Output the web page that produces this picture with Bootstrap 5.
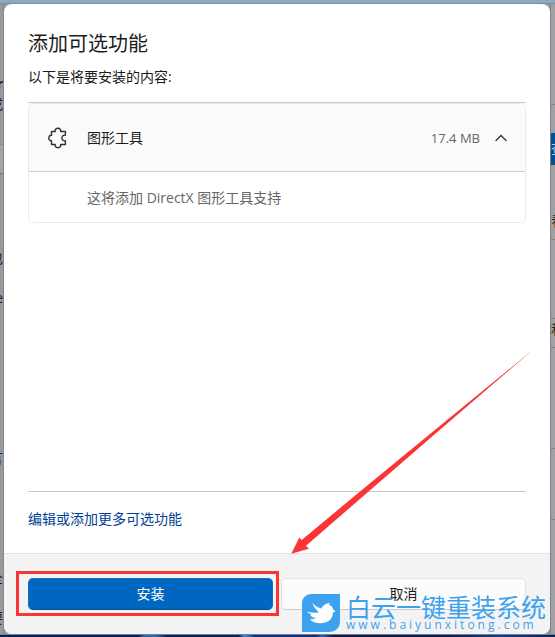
<!DOCTYPE html>
<html lang="zh-CN">
<head>
<meta charset="utf-8">
<meta name="viewport" content="width=device-width, initial-scale=1">
<title>添加可选功能</title>
<link href="https://cdn.jsdelivr.net/npm/bootstrap@5.3.0/dist/css/bootstrap.min.css" rel="stylesheet">
<style>
body { font-family: "Open Sans", "Noto Sans CJK SC", sans-serif; font-size: 14px; line-height: 20px; color: #1b1b1b; background: #97999e; }
.top-strip { height: 4px; background: #8aa9c3; border-bottom: 1px solid #7b8d9d; }
.bottom-strip { height: 3px; border-top: 1px solid #7d7f83; background: linear-gradient(90deg, #05205e 0 25%, #2a6ab5 26% 28%, #06205c 30% 43%, #3f8fd8 44%, #0a2f86 46% 57%, #2a68b8 58%, #061a4c 60% 80%, #0e3c98 90%, #06205c); }
.edge { overflow: hidden; white-space: nowrap; color: #222; }
.edge-left { width: 4px; background: #97999e; border-right: 1px solid #85878b; }
.edge-right { width: 5px; background: #a0a1a4; border-left: 1px solid #7f8184; }
.edge-word { display: flex; justify-content: flex-end; height: 20px; line-height: 20px; }
.edge-right .edge-word { justify-content: flex-start; }
.edge-gap-1 { height: 70px; }
.edge-gap-2 { height: 20px; }
.edge-gap-3 { height: 30px; }
.edge-gap-4 { height: 100px; }
.edge-gap-5 { height: 140px; }
.edge-rule { height: 1px; background: #838488; }
.edge-panel { height: 30px; background: #a4a5a6; border-top: 1px solid #8b8c90; border-bottom: 1px solid #707174; }
.edge-button { height: 32px; background: #004f98; color: #bcd; padding-top: 6px; }
.dialog-box { background: #fff; border-radius: 8px; overflow: hidden; }
.dialog-main { padding: 26px 24px 24px; }
.dialog-title { font-size: 20px; line-height: 28px; font-weight: 400; margin-bottom: 9px; }
.dialog-intro { margin-bottom: 15px; }
.feature-scroll { border-top: 1px solid #c8c8c8; border-bottom: 1px solid #c8c8c8; margin-bottom: 17px; }
.feature-card { border: 1px solid #ebebeb; border-radius: 5px; overflow: hidden; }
.feature-head { min-height: 68px; background: #fbfbfb; border: 0; border-bottom: 1px solid #d0d0d0; padding: 0 18px 0 19px; color: #1b1b1b; }
.feature-name { margin-left: 19px; }
.feature-size { font-size: 13px; margin-right: 15px; }
.muted-text { color: #666; }
.feature-detail { padding: 16px 16px 14px 58px; }
.more-link { color: #003e92; }
.dialog-foot { background: #f3f3f3; border-top: 1px solid #e3e3e3; padding: 24px; }
.foot-btn { --bs-btn-font-size: 14px; --bs-btn-line-height: 20px; --bs-btn-padding-y: 5px; --bs-btn-border-radius: 5px; }
.btn-install { --bs-btn-color: #fff; --bs-btn-bg: #0067c0; --bs-btn-border-color: #1370c3; --bs-btn-hover-color: #fff; --bs-btn-hover-bg: #1975c5; border-bottom-color: #00519a; }
.btn-cancel { --bs-btn-color: #1b1b1b; --bs-btn-bg: #fcfcfc; --bs-btn-border-color: #e3e3e3; --bs-btn-hover-bg: #f6f6f6; border-bottom-color: #ccc; }
.focus-frame { position: absolute; inset: -7px -6px -6px -12px; border: 3px solid #fa3535; pointer-events: none; }
.pointer-arrow { position: absolute; right: 15px; bottom: 80px; pointer-events: none; }
.site-mark { position: absolute; right: 4px; bottom: 2px; gap: 6px; color: #3ca2f0; pointer-events: none; }
.site-name { font-family: "Noto Sans CJK SC", sans-serif; font-size: 25px; line-height: 24px; }
.site-url { font-size: 12px; line-height: 14px; letter-spacing: 3px; }
</style>
<script src="https://cdn.jsdelivr.net/npm/bootstrap@5.3.0/dist/js/bootstrap.bundle.min.js"></script>
</head>
<body class="d-flex flex-column vh-100 overflow-hidden">
<div class="top-strip flex-shrink-0"></div>
<div class="d-flex flex-grow-1">
  <div class="edge edge-left flex-shrink-0" aria-hidden="true">
    <div class="edge-gap-1"></div>
    <div class="edge-word fw-bold">r</div>
    <div class="edge-word">成</div>
    <div class="edge-gap-3"></div>
    <div class="edge-panel"></div>
    <div class="edge-gap-1"></div>
    <div class="edge-word mt-1">也</div>
    <div class="edge-gap-2"></div>
    <div class="edge-word">e</div>
    <div class="edge-gap-5"></div>
    <div class="edge-word">言</div>
    <div class="edge-gap-4"></div>
    <div class="edge-word">全</div>
    <div class="edge-gap-2"></div>
    <div class="edge-word">要</div>
  </div>
  <main class="dialog-box position-relative flex-grow-1 d-flex flex-column">
    <div class="dialog-main flex-grow-1 d-flex flex-column">
      <h1 class="dialog-title">添加可选功能</h1>
      <p class="dialog-intro">以下是将要安装的内容:</p>
      <div class="feature-scroll flex-grow-1">
        <section class="feature-card">
          <button type="button" class="feature-head w-100 d-flex align-items-center text-start" data-bs-toggle="collapse" data-bs-target="#graphicsTools" aria-expanded="true" aria-controls="graphicsTools">
            <svg width="20" height="22" viewBox="0 0 20 22" fill="none" stroke="#303030" stroke-width="1.4" stroke-linejoin="round" aria-hidden="true"><path d="M3.5 4.5H7.2C6.6 2.6 8 1.3 9.9 1.3S13.2 2.6 12.6 4.5H17.4V8.2C15.3 7.8 13.9 9.1 13.9 11S15.3 14.2 17.4 13.8V17.5H12.6C13.2 19.4 11.8 20.7 9.9 20.7S6.6 19.4 7.2 17.5H3.5V13.7C1.8 14 .8 12.7 .8 11S1.8 8 3.5 8.3Z"/></svg>
            <span class="feature-name flex-grow-1">图形工具</span>
            <span class="feature-size muted-text">17.4 MB</span>
            <svg width="12" height="8" viewBox="0 0 12 8" fill="none" stroke="#333" stroke-width="1.3" stroke-linecap="round" aria-hidden="true"><path d="M1 6.5 6 1.5 11 6.5"/></svg>
          </button>
          <div class="collapse show" id="graphicsTools">
            <div class="feature-detail muted-text">这将添加 DirectX 图形工具支持</div>
          </div>
        </section>
      </div>
      <div><a href="#" class="more-link text-decoration-none">编辑或添加更多可选功能</a></div>
    </div>
    <footer class="dialog-foot d-flex gap-2">
      <div class="position-relative w-50">
        <button type="button" class="btn foot-btn btn-install w-100">安装</button>
        <div class="focus-frame"></div>
      </div>
      <div class="w-50">
        <button type="button" class="btn foot-btn btn-cancel w-100">取消</button>
      </div>
    </footer>
    <svg class="pointer-arrow" width="244" height="206" viewBox="0 0 244 206" aria-hidden="true"><path fill="#fa3535" d="M.3 205.7 8.3 189.5 10.7 192 69 143.5 142 83.5 243 1 144 86 73 147.5 15 197.7 18 200.8Z"/></svg>
    <div class="site-mark d-flex align-items-start">
      <svg width="38" height="38" viewBox="0 0 38 38" aria-hidden="true"><path fill="#3ca2f0" d="M9 0H38V28A10 10 0 0 1 28 38H0V9A9 9 0 0 1 9 0Z"/><path fill="#fff" d="M5 17.5C9 19 13 19.3 16.8 18.2 13.8 15.5 11.3 12.5 10.3 9 13.5 12.3 16.5 13.8 19.3 14.6 20.5 11.5 23.5 9.3 28 8.8L26.8 11C29.5 11.5 30.8 13.2 31.3 15.5L33.8 17.8 31 18.3C31 23 28.5 27 23.5 28.6 17.5 30.3 10.5 28.8 7.8 25.2 10 25.5 12.3 25 13.8 23.8 10.8 23.6 8.8 22.3 8 20.5L10.4 20.4C8 20 6.1 19 5 17.5Z"/></svg>
      <div>
        <div class="site-name">白云一键重装系统</div>
        <div class="site-url">www.baiyunxitong.com</div>
      </div>
    </div>
  </main>
  <div class="edge edge-right flex-shrink-0" aria-hidden="true">
    <div class="edge-gap-4"></div>
    <div class="edge-rule"></div>
    <div class="edge-gap-2 mb-2"></div>
    <div class="edge-button">查</div>
    <div class="edge-gap-3 mb-3"></div>
    <div class="edge-word">看</div>
    <div class="edge-rule mt-2"></div>
    <div class="edge-gap-1 mb-2"></div>
    <div class="edge-rule"></div>
    <div class="edge-word">和</div>
    <div class="edge-rule mt-2"></div>
    <div class="edge-gap-4"></div>
    <div class="edge-rule"></div>
    <div class="edge-gap-1"></div>
    <div class="edge-rule"></div>
  </div>
</div>
<div class="bottom-strip flex-shrink-0"></div>
</body>
</html>
